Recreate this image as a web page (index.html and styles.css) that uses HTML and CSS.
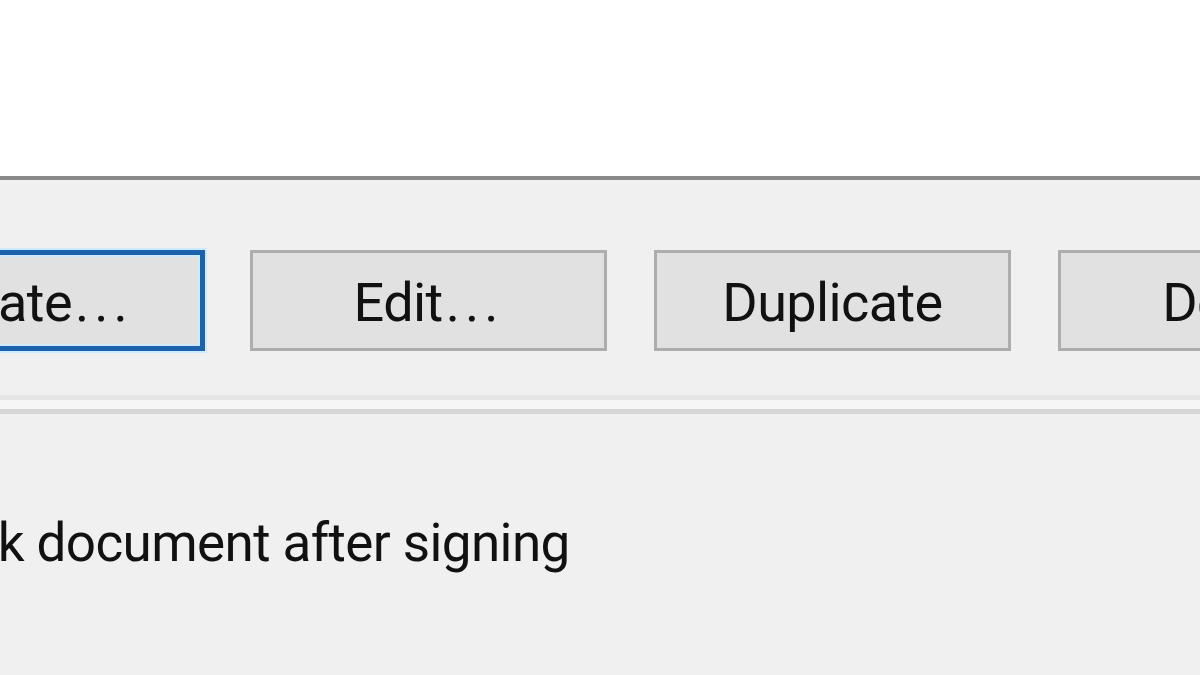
FILE: index.html
```html
<!DOCTYPE html>
<html>
<head>
<meta charset="utf-8">
<link rel="stylesheet" href="styles.css">
</head>
<body>
<div class="top"></div>
<div class="panel">
  <div class="inner">
    <div class="buttons">
      <div class="btn focused">Create<span class="dots">...</span></div>
      <div class="btn">Edit<span class="dots">...</span></div>
      <div class="btn">Duplicate</div>
      <div class="btn">Delete</div>
    </div>
    <div class="sep"></div>
    <div class="check-row">
      <span class="box"></span>
      <span class="label">Lock document after signing</span>
    </div>
  </div>
</div>
</body>
</html>
```
FILE: styles.css
```css
html, body {
  margin: 0;
  padding: 0;
}
body {
  width: 1200px;
  height: 675px;
  overflow: hidden;
  background: #ffffff;
  font-family: Roboto, "Open Sans", sans-serif;
  color: #000;
}
.top {
  height: 176px;
  background: #ffffff;
}
.panel {
  border-top: 4px solid #8a8a8a;
  background: #f0f0f0;
  height: 495px;
  overflow: hidden;
}
.inner {
  margin-left: -154px;
  width: 1800px;
  padding-top: 70px;
}
.buttons {
  display: flex;
  gap: 47px;
}
.btn {
  box-sizing: border-box;
  width: 357px;
  height: 101px;
  border: 3px solid #adadad;
  background: #e1e1e1;
  display: flex;
  align-items: center;
  justify-content: center;
  font-size: 54px;
  letter-spacing: -0.6px;
  line-height: 1;
  color: #111;
  padding-top: 4px;
}
.dots {
  letter-spacing: 5px;
  margin-left: 3px;
}
.btn.focused {
  border: 5px solid #1d63ab;
  box-shadow: 0 0 0 2px #cbeaff, inset 0 0 0 2px #cde9fb;
  width: 359px;
  margin-right: -2px;
}
.sep {
  margin-top: 44px;
  height: 19px;
  box-sizing: border-box;
  border-top: 5px solid #e5e5e5;
  border-bottom: 5px solid #d6d6d6;
  background: #f6f6f6;
}
.check-row {
  display: flex;
  align-items: center;
  gap: 20px;
  margin-top: 103px;
  padding-left: 7px;
}
.box {
  width: 40px;
  height: 40px;
  box-sizing: border-box;
  border: 3px solid #333;
  background: #fff;
}
.label {
  font-size: 53px;
  letter-spacing: -0.6px;
  line-height: 1;
  color: #111;
}
```
